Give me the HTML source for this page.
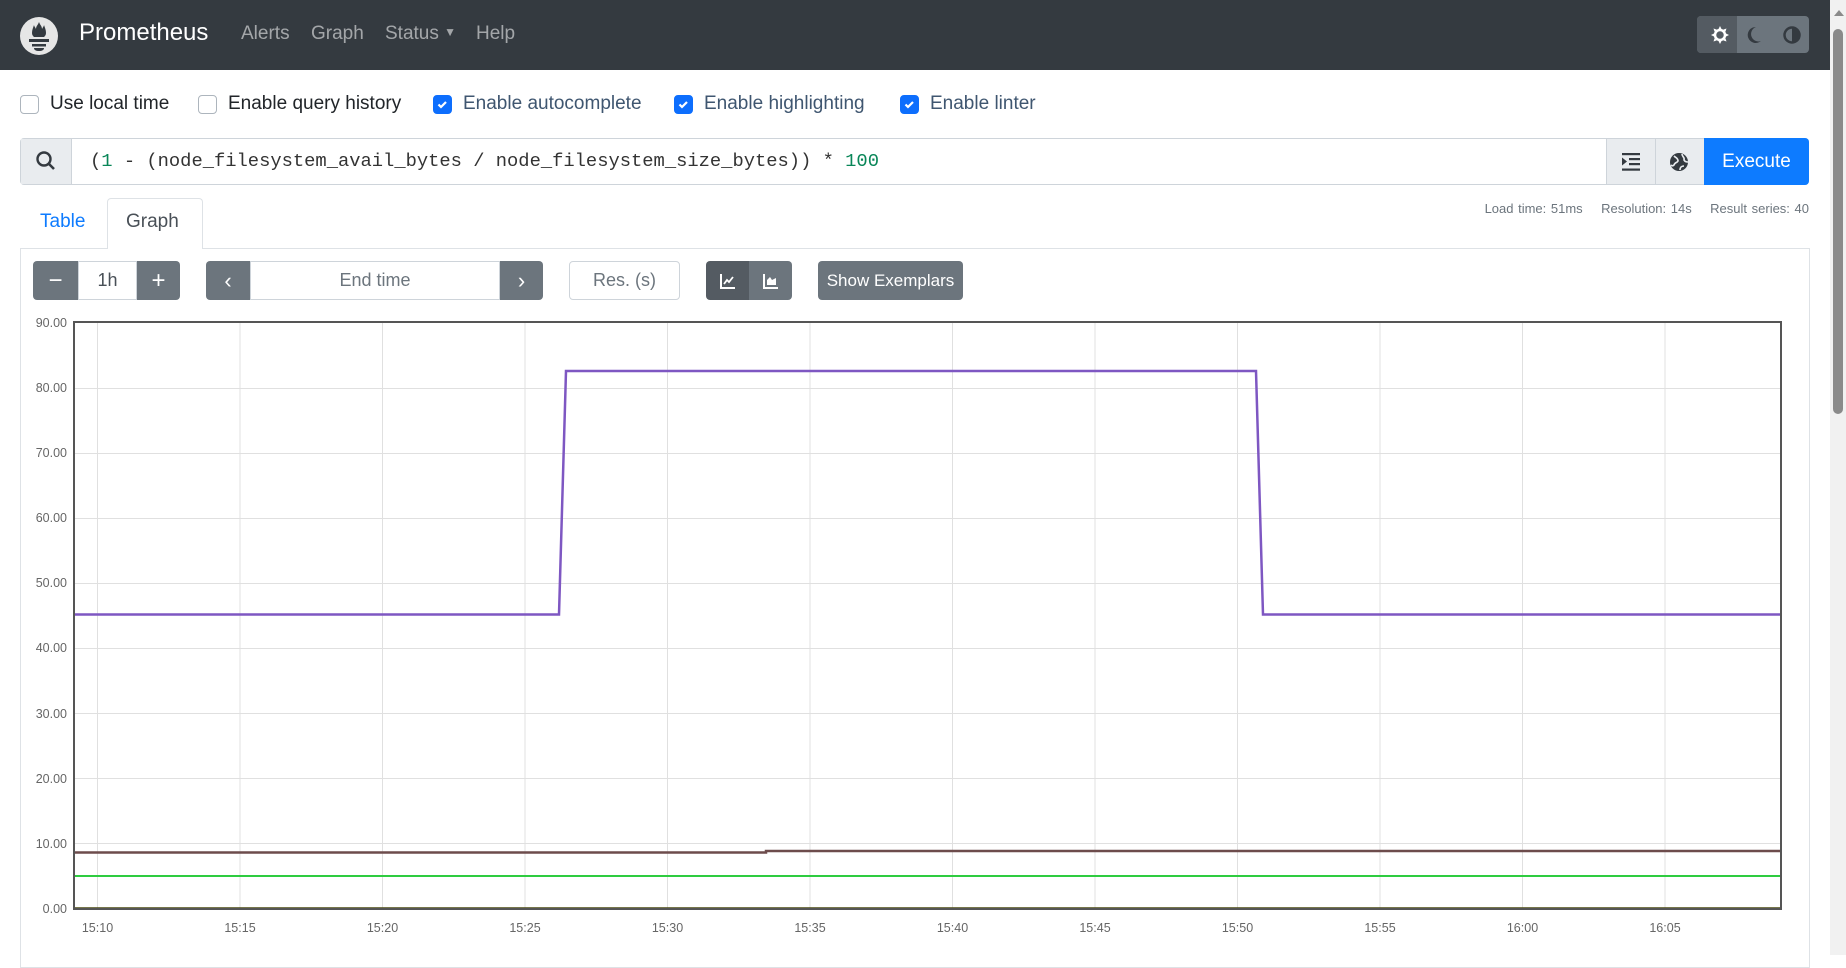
<!DOCTYPE html>
<html><head><meta charset="utf-8"><style>
*{box-sizing:border-box;margin:0;padding:0}
body{width:1846px;height:955px;overflow:hidden;background:#fff;font-family:"Liberation Sans",sans-serif;position:relative;color:#212529}
.abs{position:absolute}
.hdr{left:0;top:0;width:1830px;height:70px;background:#343a40}
.nav{color:rgba(255,255,255,.55);font-size:19px;top:23px}
.cb{width:19px;height:19px;border:1px solid #adb5bd;border-radius:4px;top:95px;background:#fff}
.cb.on{background:#0d6efd;border-color:#0d6efd}
.lbl{font-size:19px;top:93px;color:#212529}
.lbl.on{color:#3f5670}
.btn{background:#6c757d;color:#fff;display:flex;align-items:center;justify-content:center;font-size:18px}
.inp{border:1px solid #ced4da;display:flex;align-items:center;justify-content:center;font-size:18px;color:#6c757d;background:#fff}
</style></head><body>
<div class="abs hdr"></div>
<svg class="abs" style="left:19px;top:16px" width="40" height="40" viewBox="0 0 40 40">
<circle cx="20" cy="20" r="19" fill="#e6e6e6"/>
<path d="M20 6c1 3 3 4 3 7 1-2 2-3 2-4 1 3 2 5 2 8 0 2-1 3-2 4H15c-1-1-2-2-2-4 0-3 1-5 2-8 0 1 1 2 2 4 0-3 2-4 3-7z" fill="#343a40"/>
<rect x="10" y="23" width="20" height="3" fill="#343a40"/>
<rect x="13" y="28" width="14" height="2.5" fill="#343a40"/>
<path d="M15 32h10c0 2-2 3-5 3s-5-1-5-3z" fill="#343a40"/>
</svg>
<div class="abs" style="left:79px;top:19px;color:#fff;font-size:24px">Prometheus</div>
<div class="abs nav" style="left:241px">Alerts</div>
<div class="abs nav" style="left:311px">Graph</div>
<div class="abs nav" style="left:385px">Status <span style="font-size:12px;position:relative;top:-3px">▼</span></div>
<div class="abs nav" style="left:476px">Help</div>
<div class="abs" style="left:1697px;top:16px;width:112px;height:37px;background:#6c757d;border-radius:4px;overflow:hidden">
<div style="width:40px;height:37px;background:#545b62"></div></div>
<svg class="abs" style="left:1709px;top:24px" width="22" height="22" viewBox="0 0 22 22"><g fill="#fff"><circle cx="11" cy="11" r="5" fill="none" stroke="#fff" stroke-width="2.5"/><path d="M11 2l1.5 3h-3zM11 20l1.5-3h-3zM2 11l3 1.5v-3zM20 11l-3 1.5v-3zM4.5 4.5l3.3 1.1-2.2 2.2zM17.5 17.5l-3.3-1.1 2.2-2.2zM17.5 4.5l-1.1 3.3-2.2-2.2zM4.5 17.5l1.1-3.3 2.2 2.2z"/></g></svg>
<svg class="abs" style="left:1744px;top:25px" width="20" height="20" viewBox="0 0 20 20"><path d="M12 2a8 8 0 1 0 5 14A7 7 0 0 1 12 2z" fill="#343a40"/></svg>
<svg class="abs" style="left:1782px;top:25px" width="20" height="20" viewBox="0 0 20 20"><circle cx="10" cy="10" r="7.5" fill="none" stroke="#343a40" stroke-width="2.5"/><path d="M10 2.5a7.5 7.5 0 0 1 0 15z" fill="#343a40"/></svg>
<div class="abs" style="left:1830px;top:0;width:16px;height:955px;background:#f1f1f1"></div>
<div class="abs" style="left:1833px;top:29px;width:10px;height:385px;background:#8a8a8a;border-radius:5px"></div>
<div class="abs" style="left:1834px;top:10px;width:0;height:0;border-left:5px solid transparent;border-right:5px solid transparent;border-bottom:6px solid #8a8a8a"></div>

<div class="abs cb" style="left:20px"></div><div class="abs lbl" style="left:50px">Use local time</div>
<div class="abs cb" style="left:198px"></div><div class="abs lbl" style="left:228px">Enable query history</div>
<div class="abs cb on" style="left:433px"><svg width="17" height="17" viewBox="0 0 17 17"><path d="M4.5 8.5l2.5 2.5 5-5" stroke="#fff" stroke-width="2.2" fill="none"/></svg></div><div class="abs lbl on" style="left:463px">Enable autocomplete</div>
<div class="abs cb on" style="left:674px"><svg width="17" height="17" viewBox="0 0 17 17"><path d="M4.5 8.5l2.5 2.5 5-5" stroke="#fff" stroke-width="2.2" fill="none"/></svg></div><div class="abs lbl on" style="left:704px">Enable highlighting</div>
<div class="abs cb on" style="left:900px"><svg width="17" height="17" viewBox="0 0 17 17"><path d="M4.5 8.5l2.5 2.5 5-5" stroke="#fff" stroke-width="2.2" fill="none"/></svg></div><div class="abs lbl on" style="left:930px">Enable linter</div>

<div class="abs" style="left:20px;top:138px;width:1789px;height:47px;border:1px solid #ced4da;border-radius:4px"></div>
<div class="abs" style="left:21px;top:139px;width:51px;height:45px;background:#e9ecef;border-right:1px solid #ced4da"></div>
<svg class="abs" style="left:35px;top:150px" width="22" height="22" viewBox="0 0 22 22"><circle cx="9" cy="9" r="6.5" fill="none" stroke="#343a40" stroke-width="2.4"/><path d="M14 14l5 5" stroke="#343a40" stroke-width="2.6"/></svg>
<div class="abs" style="left:90px;top:150px;font-family:'Liberation Mono',monospace;font-size:18.8px;color:#333;white-space:pre">(<span style="color:#098658">1</span> - (node_filesystem_avail_bytes / node_filesystem_size_bytes)) * <span style="color:#098658">100</span></div>
<div class="abs" style="left:1606px;top:139px;width:98px;height:45px;background:#e9ecef;border-left:1px solid #ced4da"></div>
<div class="abs" style="left:1655px;top:139px;width:1px;height:45px;background:#ced4da"></div>
<svg class="abs" style="left:1620px;top:151px" width="22" height="22" viewBox="0 0 22 22"><g fill="#343a40"><rect x="2" y="2" width="18" height="2.2"/><rect x="9" y="7" width="11" height="2.2"/><rect x="9" y="12" width="11" height="2.2"/><rect x="2" y="17.5" width="18" height="2.2"/><path d="M2 6.5l5 4-5 4z"/></g></svg>
<svg class="abs" style="left:1668px;top:151px" width="22" height="22" viewBox="0 0 22 22"><circle cx="11" cy="11" r="9" fill="#343a40"/><path d="M6 5c2 2 4 2 4 5-1 2-3 1-4 4-1 1-2 1-3 0M14 3c0 3 3 3 2 6 1 2 3 2 4 2M12 19c0-3 2-4 4-4" stroke="#e9ecef" stroke-width="1.6" fill="none"/></svg>
<div class="abs" style="left:1704px;top:138px;width:105px;height:47px;background:#0d7bff;border-radius:0 4px 4px 0;color:#fff;font-size:19px;display:flex;align-items:center;justify-content:center">Execute</div>

<div class="abs" style="left:40px;top:211px;font-size:19px;color:#0d7bff">Table</div>
<div class="abs" style="left:107px;top:198px;width:96px;height:51px;border:1px solid #dee2e6;border-bottom:none;border-radius:4px 4px 0 0;background:#fff;z-index:2"></div>
<div class="abs" style="left:126px;top:211px;font-size:19px;color:#495057;z-index:3">Graph</div>
<div class="abs" style="right:37px;top:201px;font-size:13px;color:#6c757d;word-spacing:1px">Load time: 51ms &nbsp;&nbsp; Resolution: 14s &nbsp;&nbsp; Result series: 40</div>
<div class="abs" style="left:20px;top:248px;width:1790px;height:720px;border:1px solid #dee2e6"></div>

<div class="abs btn" style="left:33px;top:261px;width:45px;height:39px;border-radius:4px 0 0 4px;font-size:24px">−</div>
<div class="abs inp" style="left:78px;top:261px;width:59px;height:39px;color:#495057">1h</div>
<div class="abs btn" style="left:137px;top:261px;width:43px;height:39px;border-radius:0 4px 4px 0;font-size:24px">+</div>
<div class="abs btn" style="left:206px;top:261px;width:44px;height:39px;border-radius:4px 0 0 4px;font-size:22px">&#x2039;</div>
<div class="abs inp" style="left:250px;top:261px;width:250px;height:39px">End time</div>
<div class="abs btn" style="left:500px;top:261px;width:43px;height:39px;border-radius:0 4px 4px 0;font-size:22px">&#x203A;</div>
<div class="abs inp" style="left:569px;top:261px;width:111px;height:39px;border-radius:4px">Res. (s)</div>
<div class="abs btn" style="left:706px;top:261px;width:43px;height:39px;border-radius:4px 0 0 4px;background:#545b62"><svg width="18" height="18" viewBox="0 0 18 18"><path d="M2 2v14h14" stroke="#fff" stroke-width="2" fill="none"/><path d="M5 12l3-4 2 2 4-5" stroke="#fff" stroke-width="1.8" fill="none"/></svg></div>
<div class="abs btn" style="left:749px;top:261px;width:43px;height:39px;border-radius:0 4px 4px 0"><svg width="18" height="18" viewBox="0 0 18 18"><path d="M2 2v14h14" stroke="#fff" stroke-width="2" fill="none"/><path d="M5 13V8l3-3 2 3 4-2v7z" fill="#fff"/></svg></div>
<div class="abs btn" style="left:818px;top:261px;width:145px;height:39px;border-radius:4px;font-size:17px">Show Exemplars</div>

<svg class="abs" style="left:0;top:0" width="1830" height="955">
<g stroke="#e0e0e0" stroke-width="1">
<line x1="74" x2="1781" y1="388.5" y2="388.5"/><line x1="74" x2="1781" y1="453.5" y2="453.5"/><line x1="74" x2="1781" y1="518.5" y2="518.5"/><line x1="74" x2="1781" y1="583.5" y2="583.5"/><line x1="74" x2="1781" y1="648.5" y2="648.5"/><line x1="74" x2="1781" y1="713.5" y2="713.5"/><line x1="74" x2="1781" y1="778.5" y2="778.5"/><line x1="74" x2="1781" y1="843.5" y2="843.5"/>
<line x1="97.5" x2="97.5" y1="322" y2="909"/><line x1="240" x2="240" y1="322" y2="909"/><line x1="382.5" x2="382.5" y1="322" y2="909"/><line x1="525" x2="525" y1="322" y2="909"/><line x1="667.5" x2="667.5" y1="322" y2="909"/><line x1="810" x2="810" y1="322" y2="909"/><line x1="952.5" x2="952.5" y1="322" y2="909"/><line x1="1095" x2="1095" y1="322" y2="909"/><line x1="1237.5" x2="1237.5" y1="322" y2="909"/><line x1="1380" x2="1380" y1="322" y2="909"/><line x1="1522.5" x2="1522.5" y1="322" y2="909"/><line x1="1665" x2="1665" y1="322" y2="909"/>
</g>
<path d="M74 614.5H559L566 371H1256L1263 614.5H1781" stroke="#7e57c2" stroke-width="2.5" fill="none"/>
<path d="M74 852.5H766V851H1781" stroke="#6d4c4c" stroke-width="2.5" fill="none"/>
<path d="M74 876H1781" stroke="#2ecc40" stroke-width="2" fill="none"/>
<path d="M74 908.5H1781" stroke="#4a4a10" stroke-width="2.5" fill="none"/>
<rect x="74" y="322" width="1707" height="587" fill="none" stroke="#555" stroke-width="2"/>
<g font-family="Liberation Sans,sans-serif" font-size="12.5" fill="#666" text-anchor="end">
<text x="67" y="327">90.00</text><text x="67" y="392">80.00</text><text x="67" y="457">70.00</text><text x="67" y="522">60.00</text><text x="67" y="587">50.00</text><text x="67" y="652">40.00</text><text x="67" y="718">30.00</text><text x="67" y="783">20.00</text><text x="67" y="848">10.00</text><text x="67" y="913">0.00</text>
</g>
<g font-family="Liberation Sans,sans-serif" font-size="12.5" fill="#666" text-anchor="middle">
<text x="97.5" y="932">15:10</text><text x="240" y="932">15:15</text><text x="382.5" y="932">15:20</text><text x="525" y="932">15:25</text><text x="667.5" y="932">15:30</text><text x="810" y="932">15:35</text><text x="952.5" y="932">15:40</text><text x="1095" y="932">15:45</text><text x="1237.5" y="932">15:50</text><text x="1380" y="932">15:55</text><text x="1522.5" y="932">16:00</text><text x="1665" y="932">16:05</text>
</g>
</svg>
</body></html>
